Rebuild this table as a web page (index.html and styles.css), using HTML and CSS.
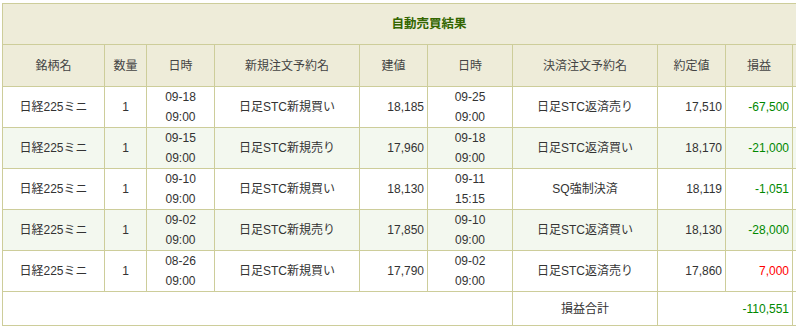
FILE: index.html
```html
<!DOCTYPE html>
<html lang="ja">
<head>
<meta charset="utf-8">
<title>自動売買結果</title>
<link rel="stylesheet" href="styles.css">
</head>
<body>
<div class="wrap">
<table class="result">
  <colgroup>
    <col class="c1"><col class="c2"><col class="c3"><col class="c4"><col class="c5">
    <col class="c6"><col class="c7"><col class="c8"><col class="c9"><col class="c10">
  </colgroup>
  <thead>
    <tr class="title-row"><th colspan="10" class="title">自動売買結果</th></tr>
    <tr class="head-row">
      <th>銘柄名</th><th>数量</th><th>日時</th><th>新規注文予約名</th><th>建値</th>
      <th>日時</th><th>決済注文予約名</th><th>約定値</th><th>損益</th><th></th>
    </tr>
  </thead>
  <tbody>
    <tr>
      <td>日経225ミニ</td><td>1</td><td>09-18<br>09:00</td><td>日足STC新規買い</td><td class="num">18,185</td>
      <td>09-25<br>09:00</td><td>日足STC返済売り</td><td class="num">17,510</td><td class="num loss">-67,500</td><td></td>
    </tr>
    <tr class="alt">
      <td>日経225ミニ</td><td>1</td><td>09-15<br>09:00</td><td>日足STC新規売り</td><td class="num">17,960</td>
      <td>09-18<br>09:00</td><td>日足STC返済買い</td><td class="num">18,170</td><td class="num loss">-21,000</td><td></td>
    </tr>
    <tr>
      <td>日経225ミニ</td><td>1</td><td>09-10<br>09:00</td><td>日足STC新規買い</td><td class="num">18,130</td>
      <td>09-11<br>15:15</td><td>SQ強制決済</td><td class="num">18,119</td><td class="num loss">-1,051</td><td></td>
    </tr>
    <tr class="alt">
      <td>日経225ミニ</td><td>1</td><td>09-02<br>09:00</td><td>日足STC新規売り</td><td class="num">17,850</td>
      <td>09-10<br>09:00</td><td>日足STC返済買い</td><td class="num">18,130</td><td class="num loss">-28,000</td><td></td>
    </tr>
    <tr>
      <td>日経225ミニ</td><td>1</td><td>08-26<br>09:00</td><td>日足STC新規買い</td><td class="num">17,790</td>
      <td>09-02<br>09:00</td><td>日足STC返済売り</td><td class="num">17,860</td><td class="num gain">7,000</td><td></td>
    </tr>
    <tr class="total-row">
      <td colspan="6"></td><td>損益合計</td><td colspan="2" class="num loss">-110,551</td><td></td>
    </tr>
  </tbody>
</table>
</div>
</body>
</html>
```
FILE: styles.css
```css
html, body {
  margin: 0;
  padding: 0;
  background: #ffffff;
  overflow: hidden;
}
.wrap {
  padding: 3px 0 0 2px;
  width: 794px;
  overflow: hidden;
}
.result {
  border-collapse: collapse;
  table-layout: fixed;
  width: 853px;
  font-family: "Liberation Sans", "Noto Sans CJK JP", Arial, sans-serif;
  font-size: 12px;
  line-height: 20px;
  color: #333333;
}
.c1 { width: 102px; }
.c2 { width: 42px; }
.c3 { width: 68px; }
.c4 { width: 145px; }
.c5 { width: 68px; }
.c6 { width: 85px; }
.c7 { width: 145px; }
.c8 { width: 68px; }
.c9 { width: 67px; }
.c10 { width: 63px; }
.result th, .result td {
  border: 1px solid #cdcd9a;
  padding: 0 3px;
  text-align: center;
  vertical-align: middle;
}
.title-row th {
  background: #eeecd9;
  height: 40px;
  color: #336600;
  font-weight: bold;
  font-size: 12.5px;
}
.head-row th {
  background: #eeecd9;
  height: 41px;
  font-weight: normal;
  color: #444444;
}
.result tbody td {
  height: 40px;
  background: #ffffff;
}
.result tbody tr.alt td {
  background: #f3f8ef;
}
.result tbody tr.total-row td {
  height: 33px;
}
.result td.num {
  text-align: right;
}
.loss { color: #008800; }
.gain { color: #ff0000; }
```
